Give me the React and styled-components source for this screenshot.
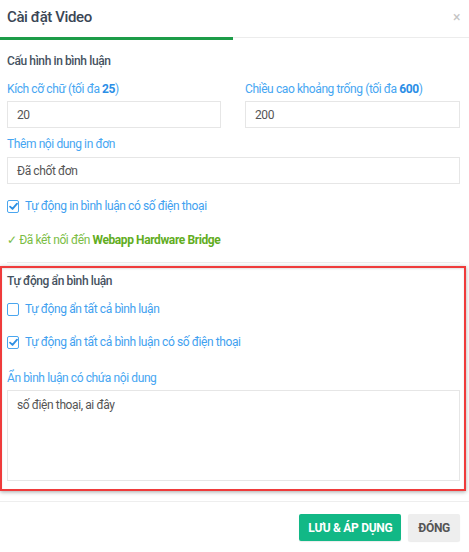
import React from "react";
import styled, { createGlobalStyle } from "styled-components";

const Global = createGlobalStyle`
  html, body { margin: 0; padding: 0; background: #fff; }
  body { font-family: Roboto, "Noto Sans", Arial, sans-serif; -webkit-font-smoothing: antialiased; }
  * { box-sizing: border-box; }
`;

const Dialog = styled.div`
  width: 469px;
  height: 552px;
  background: #fff;
  display: flex;
  flex-direction: column;
  overflow: hidden;
  letter-spacing: -0.4px;
`;

const Header = styled.div`
  height: 37px;
  display: flex;
  align-items: center;
  justify-content: space-between;
  padding: 0 9px 4px 7px;
`;

const Title = styled.h1`
  margin: 0;
  font-size: 15px;
  font-weight: 500;
  color: #3a4655;
`;

const Close = styled.span`
  font-size: 14px;
  color: #c4c4c4;
  line-height: 1;
`;

const Track = styled.div`
  height: 3px;
  background: linear-gradient(#ececec 0 1px, transparent 1px);
`;

const Fill = styled.div`
  width: ${(p) => p.$pct}%;
  height: 3px;
  background: #1d9c48;
`;

const Body = styled.div`
  padding: 0 9px 0 7px;
  display: flex;
  flex-direction: column;
`;

const SectionTitle = styled.div`
  font-size: 12px;
  font-weight: 500;
  color: #46525f;
  line-height: 16px;
  margin-top: ${(p) => p.$mt || 0}px;
`;

const Grid = styled.div`
  display: grid;
  grid-template-columns: 214px 215px;
  column-gap: 24px;
  margin-top: ${(p) => p.$mt || 0}px;
`;

const Field = styled.div`
  display: flex;
  flex-direction: column;
  margin-top: ${(p) => p.$mt || 0}px;
`;

const Label = styled.label`
  font-size: 12px;
  color: #46a6f2;
  line-height: 16px;
  margin-bottom: ${(p) => p.$mb ?? 4}px;
  b { color: #2a8ee6; font-weight: 700; }
`;

const Input = styled.div`
  height: 27px;
  border: 1px solid #e6e6e6;
  padding: 0 9px;
  display: flex;
  align-items: center;
  font-size: 12px;
  color: #555;
`;

const TextArea = styled.div`
  height: 91px;
  border: 1px solid #e6e6e6;
  padding: 6px 9px;
  font-size: 12px;
  color: #555;
  line-height: 16px;
`;

const CheckRow = styled.label`
  display: flex;
  align-items: center;
  gap: 6px;
  font-size: 12px;
  color: #3fa1f0;
  line-height: 16px;
  margin-top: ${(p) => p.$mt || 0}px;
`;

const Box = styled.span`
  width: 12px;
  height: 13px;
  border: 1.3px solid #4aa6ef;
  border-radius: 2px;
  display: flex;
  align-items: center;
  justify-content: center;
  background: #fff;
`;

const Connected = styled.div`
  font-size: 12px;
  color: #7bbd45;
  line-height: 16px;
  margin-top: ${(p) => p.$mt || 0}px;
  b { color: #62ad1e; font-weight: 700; }
`;

const Divider = styled.div`
  height: 1px;
  background: #ececec;
  margin-top: ${(p) => p.$mt || 0}px;
`;

const Highlight = styled.section`
  margin: 3px -6px 0 -7px;
  border: 2px solid #ef3b3b;
  padding: 5px 4px 8px 5px;
  display: flex;
  flex-direction: column;
  box-shadow: 0 1px 4px rgba(0, 0, 0, 0.35), inset 0 1px 2px rgba(0, 0, 0, 0.12);
`;

const Footer = styled.div`
  margin-top: 10px;
  border-top: 1px solid #eeeeee;
  padding: 12px 9px 0 7px;
  display: flex;
  justify-content: flex-end;
  gap: 7px;
`;

const Button = styled.button`
  height: 27px;
  border: none;
  border-radius: 2px;
  padding: 0 ${(p) => (p.$primary ? 9 : 10)}px;
  font-family: inherit;
  font-size: 12px;
  letter-spacing: -0.3px;
  font-weight: 700;
  background: ${(p) => (p.$primary ? "#12b886" : "#eeeeee")};
  color: ${(p) => (p.$primary ? "#fff" : "#555")};
  box-shadow: 0 1px 1px rgba(0, 0, 0, 0.08);
`;

const Check = () => (
  <svg width="9" height="9" viewBox="0 0 10 9">
    <path d="M1.2 4.6 L3.9 7.2 L8.9 1.3" fill="none" stroke="#2d8fe3" strokeWidth="2" strokeLinecap="round" strokeLinejoin="round" />
  </svg>
);

const Checkbox = ({ checked }) => <Box>{checked && <Check />}</Box>;

export default function App() {
  return (
    <>
      <Global />
      <Dialog>
        <Header>
          <Title>Cài đặt Video</Title>
          <Close>×</Close>
        </Header>
        <Track>
          <Fill $pct={49.7} />
        </Track>
        <Body>
          <SectionTitle $mt={13}>Cấu hình in bình luận</SectionTitle>
          <Grid $mt={12}>
            <Field>
              <Label>
                Kích cỡ chữ (tối đa <b>25</b>)
              </Label>
              <Input>20</Input>
            </Field>
            <Field>
              <Label>
                Chiều cao khoảng trống (tối đa <b>600</b>)
              </Label>
              <Input>200</Input>
            </Field>
          </Grid>
          <Field $mt={8}>
            <Label $mb={5}>Thêm nội dung in đơn</Label>
            <Input>Đã chốt đơn</Input>
          </Field>
          <CheckRow $mt={14}>
            <Checkbox checked />
            Tự động in bình luận có số điện thoại
          </CheckRow>
          <Connected $mt={18}>
            ✓ Đã kết nối đến <b>Webapp Hardware Bridge</b>
          </Connected>
          <Divider $mt={14} />
          <Highlight>
            <SectionTitle>Tự động ẩn bình luận</SectionTitle>
            <CheckRow $mt={12}>
              <Checkbox />
              Tự động ẩn tất cả bình luận
            </CheckRow>
            <CheckRow $mt={17}>
              <Checkbox checked />
              Tự động ẩn tất cả bình luận có số điện thoại
            </CheckRow>
            <Field $mt={20}>
              <Label>Ẩn bình luận có chứa nội dung</Label>
              <TextArea>số điện thoại, ai đây</TextArea>
            </Field>
          </Highlight>
        </Body>
        <Footer>
          <Button $primary>LƯU &amp; ÁP DỤNG</Button>
          <Button>ĐÓNG</Button>
        </Footer>
      </Dialog>
    </>
  );
}
